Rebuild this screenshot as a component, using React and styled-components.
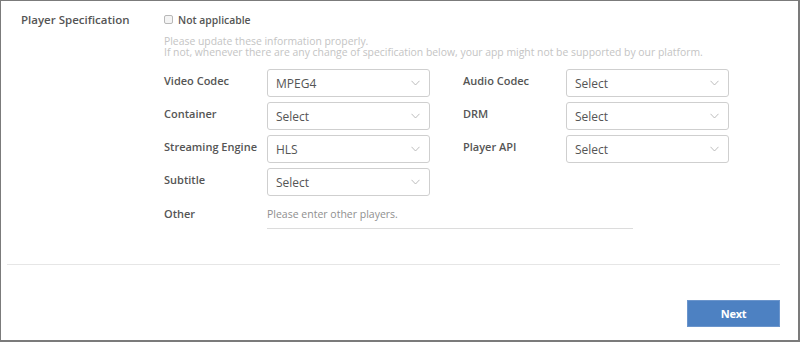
import React from "react";
import styled, { createGlobalStyle } from "styled-components";

const GlobalStyle = createGlobalStyle`
  html, body {
    margin: 0;
    padding: 0;
    background: #ffffff;
  }
  * {
    box-sizing: border-box;
  }
`;

const Frame = styled.div`
  width: 800px;
  height: 342px;
  border-style: solid;
  border-color: #7b7b7b;
  border-width: 1px 2px 2px 1px;
  background: #ffffff;
  font-family: "Open Sans", "Noto Sans", sans-serif;
  color: #555555;
  display: flex;
  flex-direction: column;
`;

const Section = styled.div`
  display: flex;
  padding: 10px 0 0 20px;
  height: 263px;
`;

const SectionTitle = styled.div`
  width: 143px;
  font-size: 11.5px;
  font-weight: 600;
  line-height: 18px;
  color: #555555;
`;

const Content = styled.div`
  flex: 1;
  display: flex;
  flex-direction: column;
`;

const CheckRow = styled.label`
  display: flex;
  align-items: center;
  height: 18px;
  gap: 5px;
  font-size: 10.4px;
  font-weight: 600;
  color: #555555;
`;

const Box = styled.span`
  width: 9px;
  height: 9px;
  border: 1px solid #b8b8b8;
  border-radius: 2px;
  background: #f4f4f4;
  margin-bottom: 1px;
`;

const Hint = styled.div`
  margin-top: 7px;
  font-size: 10.4px;
  line-height: 10.5px;
  color: #c4c4c4;
`;

const Grid = styled.div`
  margin-top: 12px;
  display: grid;
  grid-template-columns: 103px 163px 33px 103px 163px;
  grid-auto-rows: 28px;
  row-gap: 5px;
`;

const Label = styled.div`
  font-size: 11px;
  font-weight: 600;
  color: #555555;
  line-height: 28px;
  margin-top: -2px;
  grid-column: ${(p) => p.$col};
`;

const SelectBox = styled.div`
  grid-column: ${(p) => p.$col};
  border: 1px solid #cfcfcf;
  border-radius: 3px;
  display: flex;
  align-items: center;
  justify-content: space-between;
  padding: 0 9px 0 8px;
  font-size: 12px;
  color: #555555;
`;

const Chevron = styled.svg`
  width: 9px;
  height: 6px;
  color: #b5b5b5;
`;

const OtherRow = styled.div`
  margin-top: 9px;
  display: flex;
  align-items: flex-start;
`;

const OtherLabel = styled.div`
  width: 103px;
  font-size: 11px;
  font-weight: 600;
  line-height: 18px;
  color: #555555;
`;

const OtherInput = styled.div`
  width: 366px;
  height: 24px;
  border-bottom: 1px solid #dcdcdc;
  font-size: 10.5px;
  line-height: 18px;
  color: #8f8f8f;
`;

const Divider = styled.div`
  margin: 0 18px 0 6px;
  height: 1px;
  background: #e6e6e6;
`;

const Footer = styled.div`
  display: flex;
  justify-content: flex-end;
  padding: 35px 18px 0 0;
`;

const NextButton = styled.button`
  width: 93px;
  height: 27px;
  border: 1px solid #6b95cc;
  background: #4d81c2;
  color: #ffffff;
  font-family: "Open Sans", "Noto Sans", sans-serif;
  font-size: 11px;
  font-weight: 700;
  letter-spacing: -0.3px;
  padding: 0;
`;

const Select = ({ value, col }) => (
  <SelectBox $col={col}>
    <span>{value}</span>
    <Chevron viewBox="0 0 9 6" fill="none">
      <path d="M0.5 0.8 L4.5 5 L8.5 0.8" stroke="currentColor" strokeWidth="0.9" />
    </Chevron>
  </SelectBox>
);

const fields = [
  ["Video Codec", "MPEG4", "Audio Codec", "Select"],
  ["Container", "Select", "DRM", "Select"],
  ["Streaming Engine", "HLS", "Player API", "Select"],
  ["Subtitle", "Select"],
];

const App = () => {
  return (
    <>
      <GlobalStyle />
      <Frame>
        <Section>
          <SectionTitle>Player Specification</SectionTitle>
          <Content>
            <CheckRow>
              <Box />
              Not applicable
            </CheckRow>
            <Hint>
              Please update these information properly.
              <br />
              If not, whenever there are any change of specification below,
              your app might not be supported by our platform.
            </Hint>
            <Grid>
              {fields.map((row) => (
                <React.Fragment key={row[0]}>
                  <Label $col={1}>{row[0]}</Label>
                  <Select value={row[1]} col={2} />
                  {row[2] && (
                    <>
                      <Label $col={4}>{row[2]}</Label>
                      <Select value={row[3]} col={5} />
                    </>
                  )}
                </React.Fragment>
              ))}
            </Grid>
            <OtherRow>
              <OtherLabel>Other</OtherLabel>
              <OtherInput>Please enter other players.</OtherInput>
            </OtherRow>
          </Content>
        </Section>
        <Divider />
        <Footer>
          <NextButton>Next</NextButton>
        </Footer>
      </Frame>
    </>
  );
};

export default App;
